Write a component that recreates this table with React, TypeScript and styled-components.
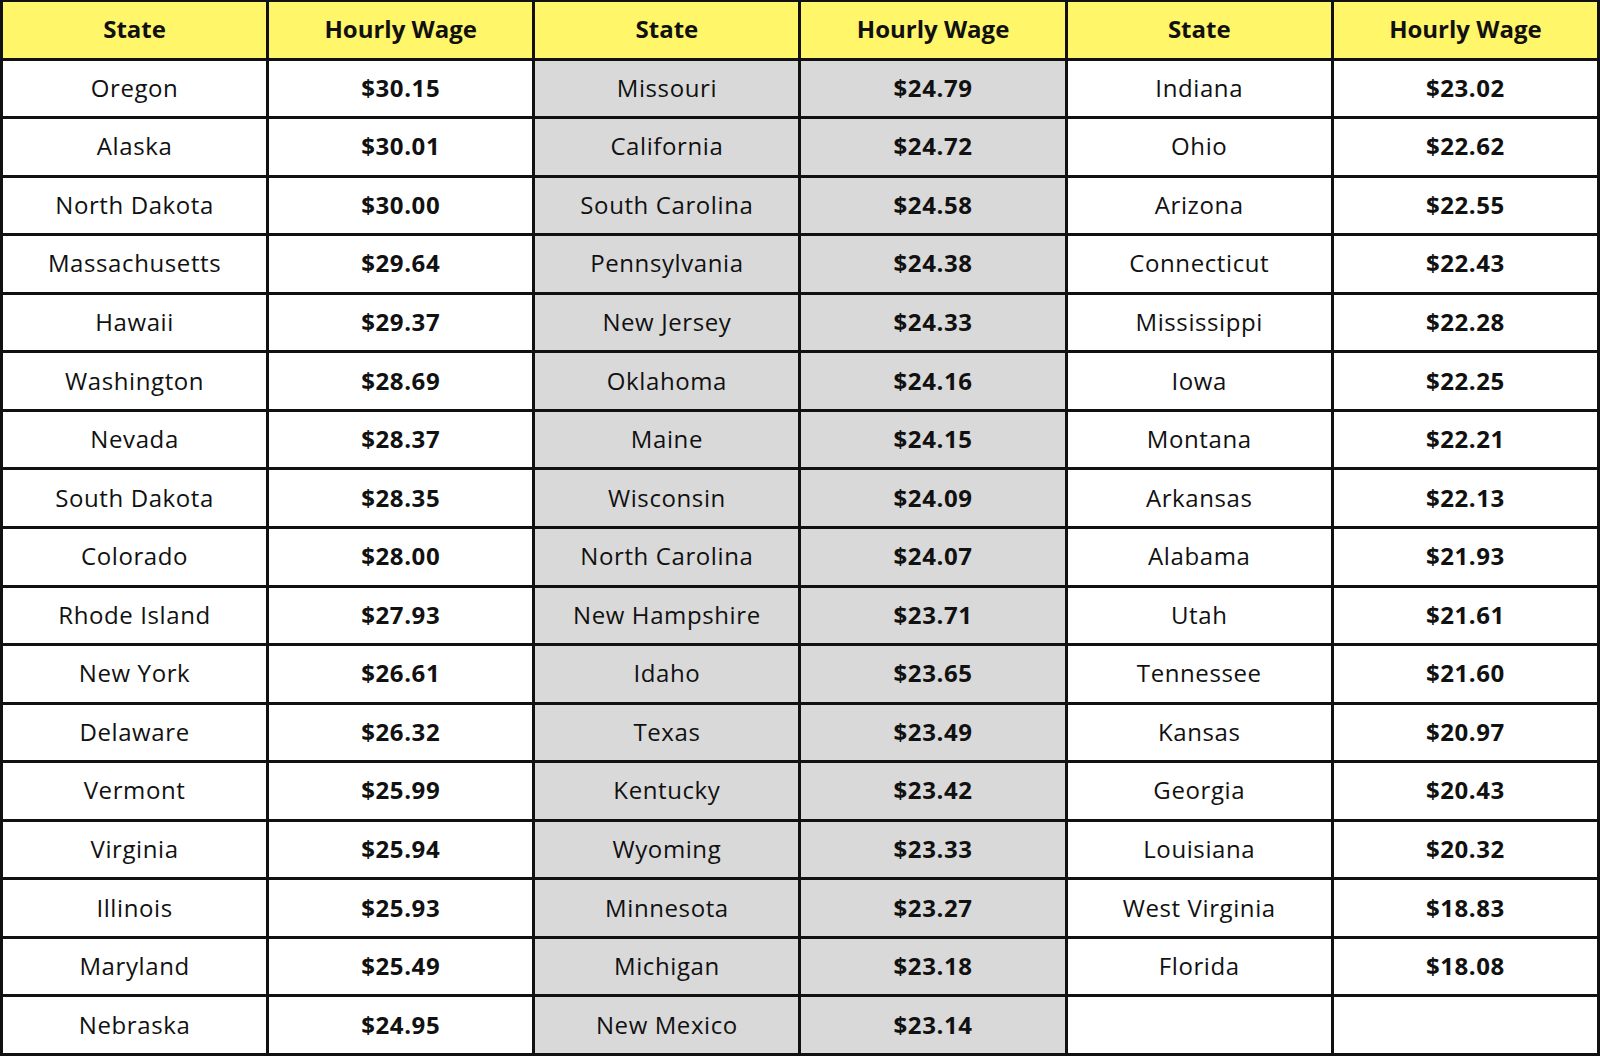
import React from 'react';
import styled, { createGlobalStyle } from 'styled-components';

type Row = [string, string];

const first: Row[] = [
  ['Oregon', '$30.15'],
  ['Alaska', '$30.01'],
  ['North Dakota', '$30.00'],
  ['Massachusetts', '$29.64'],
  ['Hawaii', '$29.37'],
  ['Washington', '$28.69'],
  ['Nevada', '$28.37'],
  ['South Dakota', '$28.35'],
  ['Colorado', '$28.00'],
  ['Rhode Island', '$27.93'],
  ['New York', '$26.61'],
  ['Delaware', '$26.32'],
  ['Vermont', '$25.99'],
  ['Virginia', '$25.94'],
  ['Illinois', '$25.93'],
  ['Maryland', '$25.49'],
  ['Nebraska', '$24.95'],
];

const second: Row[] = [
  ['Missouri', '$24.79'],
  ['California', '$24.72'],
  ['South Carolina', '$24.58'],
  ['Pennsylvania', '$24.38'],
  ['New Jersey', '$24.33'],
  ['Oklahoma', '$24.16'],
  ['Maine', '$24.15'],
  ['Wisconsin', '$24.09'],
  ['North Carolina', '$24.07'],
  ['New Hampshire', '$23.71'],
  ['Idaho', '$23.65'],
  ['Texas', '$23.49'],
  ['Kentucky', '$23.42'],
  ['Wyoming', '$23.33'],
  ['Minnesota', '$23.27'],
  ['Michigan', '$23.18'],
  ['New Mexico', '$23.14'],
];

const third: Row[] = [
  ['Indiana', '$23.02'],
  ['Ohio', '$22.62'],
  ['Arizona', '$22.55'],
  ['Connecticut', '$22.43'],
  ['Mississippi', '$22.28'],
  ['Iowa', '$22.25'],
  ['Montana', '$22.21'],
  ['Arkansas', '$22.13'],
  ['Alabama', '$21.93'],
  ['Utah', '$21.61'],
  ['Tennessee', '$21.60'],
  ['Kansas', '$20.97'],
  ['Georgia', '$20.43'],
  ['Louisiana', '$20.32'],
  ['West Virginia', '$18.83'],
  ['Florida', '$18.08'],
  ['', ''],
];

const groups = [first, second, third];

const App = () => {
  return (
    <>
      <GlobalStyle />
      <StTable>
        {groups.map((_, g) => (
          <React.Fragment key={`h${g}`}>
            <StHead>State</StHead>
            <StHead>Hourly Wage</StHead>
          </React.Fragment>
        ))}
        {first.map((_, i) =>
          groups.map((group, g) => (
            <React.Fragment key={`${i}-${g}`}>
              <StCell $shaded={g === 1}>{group[i][0]}</StCell>
              <StCell $shaded={g === 1} $bold>
                {group[i][1]}
              </StCell>
            </React.Fragment>
          ))
        )}
      </StTable>
    </>
  );
};

export default App;

const GlobalStyle = createGlobalStyle`
  html, body {
    margin: 0;
    padding: 0;
    background: #ffffff;
  }
`;

const StTable = styled.div`
  box-sizing: border-box;
  width: 1600px;
  height: 1056px;
  display: grid;
  grid-template-columns: repeat(6, 1fr);
  grid-template-rows: repeat(18, 1fr);
  gap: 3px;
  padding: 2px 3px 3px 3px;
  background: #111111;
  font-family: 'Open Sans', 'Liberation Sans', sans-serif;
  color: #111111;
`;

const StHead = styled.div`
  display: flex;
  align-items: center;
  justify-content: center;
  padding-bottom: 2px;
  background: #fff66a;
  font-size: 24px;
  font-weight: 700;
`;

const StCell = styled.div<{ $shaded?: boolean; $bold?: boolean }>`
  display: flex;
  align-items: center;
  justify-content: center;
  padding-bottom: 2px;
  background: ${(p) => (p.$shaded ? '#d9d9d9' : '#ffffff')};
  font-size: 24px;
  font-weight: ${(p) => (p.$bold ? 700 : 400)};
  letter-spacing: 0.6px;
`;
